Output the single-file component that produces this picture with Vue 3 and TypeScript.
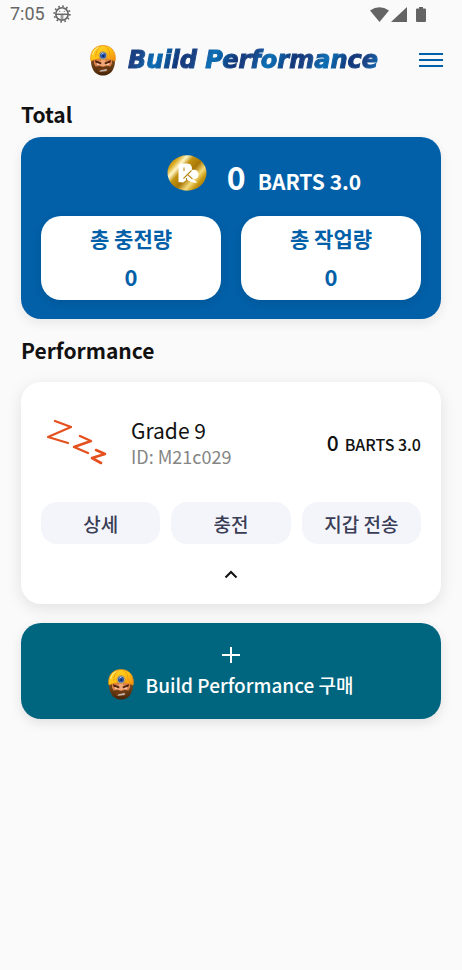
<script setup lang="ts">
import { ref } from 'vue'

interface Stat {
  label: string
  value: number
}

const unit = 'BARTS 3.0'
const balance = ref(0)
const stats = ref<Stat[]>([
  { label: '총 충전량', value: 0 },
  { label: '총 작업량', value: 0 },
])
const worker = ref({ grade: 'Grade 9', id: 'M21c029', amount: 0 })
const actions: string[] = ['상세', '충전', '지갑 전송']
const expanded = ref(true)
</script>

<template>
  <div class="page">
    <svg class="sprite" aria-hidden="true">
      <defs>
        <linearGradient id="helmet" x1="0" y1="0" x2="1" y2="1">
          <stop offset="0" stop-color="#ffd52e" />
          <stop offset="0.5" stop-color="#ffc414" />
          <stop offset="1" stop-color="#f08a12" />
        </linearGradient>
        <linearGradient id="beard" x1="0" y1="0" x2="0" y2="1">
          <stop offset="0" stop-color="#85501f" />
          <stop offset="1" stop-color="#452509" />
        </linearGradient>
        <linearGradient id="gold" x1="0" y1="0.1" x2="1" y2="0.9">
          <stop offset="0" stop-color="#b07c08" />
          <stop offset="0.16" stop-color="#d8a91c" />
          <stop offset="0.27" stop-color="#fff6c8" />
          <stop offset="0.38" stop-color="#c2920f" />
          <stop offset="0.55" stop-color="#a87706" />
          <stop offset="0.7" stop-color="#f4dc7c" />
          <stop offset="0.82" stop-color="#c8960f" />
          <stop offset="1" stop-color="#94690a" />
        </linearGradient>
        <symbol id="miner" viewBox="0 0 26 31">
          <path d="M1.200 13C.8 17 1 21 3 24.500 5 28.500 9 30.600 13 30.600S21 28.500 23 24.500C25 21 25.200 17 24.800 13z" fill="url(#beard)" />
          <path d="M4 13h18v5.500l-1.500 3-4-.5-3.500 1-3.500-1-4 .5L4 18.500z" fill="#d9804f" />
          <path d="M11.200 14h3.600l1.200 6.500-3 1.200-3-1.200z" fill="#f0a576" />
          <path d="M5 15l6.500 2.700-.5 1.600-5.500-1.700zM21 15l-6.500 2.700.5 1.600 5.500-1.700z" fill="#4b210b" />
          <path d="M6.800 18.300l3.200 1-1.500.8-1.700-.6zM19.200 18.300l-3.200 1 1.500.8 1.700-.6z" fill="#f3dccb" />
          <path d="M7 23.500c3-2.500 9-2.500 12 0l-1 3.500H8z" fill="#6d3811" />
          <path d="M9.500 26c2-1.800 5-1.200 7.500-2.300l-.5 2.400-6.500.7z" fill="#bfb5ad" />
          <path d="M.6 14.500C.2 6 5 .5 13 .5S25.800 6 25.400 14.500q.2 2-1.300 1.200C19 13.200 7 13.200 1.900 15.700.4 16.500.6 14.500.6 14.500z" fill="url(#helmet)" stroke="#e78b12" stroke-width="0.7" />
          <path d="M10.500 1.500C7.500 3 6 7 5.800 12M15.500 1.500C18.500 3 20 7 20.200 12" fill="none" stroke="#f0980e" stroke-width="0.9" />
          <path d="M8.500 2.500C5 4 3 7 2.700 10" fill="none" stroke="#fff09a" stroke-width="1" />
          <circle cx="13" cy="10.500" r="4" fill="#d7c99b" stroke="#a4792a" stroke-width="0.6" />
          <circle cx="13" cy="10.500" r="3.100" fill="#2b55a8" />
          <path d="M11.200 9.600a2 2 0 0 1 2.200-1.200" fill="none" stroke="#a6cbff" stroke-width="1" />
          <circle cx="13.300" cy="11" r="1" fill="#0c2358" />
        </symbol>
      </defs>
    </svg>

    <div class="status">
      <span class="clock">7:05</span>
      <svg class="gear" viewBox="0 0 18 18" aria-hidden="true">
        <circle cx="9" cy="9" r="7.800" fill="none" stroke="#666" stroke-width="1.800" stroke-dasharray="1.600 2.484" />
        <circle cx="9" cy="9" r="6.200" fill="none" stroke="#666" stroke-width="1.600" />
        <path d="M3 9.300h12" stroke="#666" stroke-width="1.500" />
        <path d="M8.200 9.500v5.500M9.800 9.500v5.500" stroke="#666" stroke-width="0.900" />
        <path d="M6 6.400h1.300M10.700 6.400H12" stroke="#888" stroke-width="1" />
      </svg>
      <div class="signals">
        <svg width="19" height="15" viewBox="0 0 19 15" aria-hidden="true"><path d="M0 3.500Q9.500-3 19 3.500L9.500 15z" fill="#646464" /></svg>
        <svg width="16" height="15" viewBox="0 0 16 15" aria-hidden="true"><path d="M16 0v15H0z" fill="#646464" /></svg>
        <svg class="battery" width="10" height="15" viewBox="0 0 10 15" aria-hidden="true"><path d="M3 0h4v1.500h2q1 0 1 1V14q0 1-1 1H1q-1 0-1-1V2.500q0-1 1-1h2z" fill="#646464" /></svg>
      </div>
    </div>

    <header class="header">
      <div class="brand">
        <svg class="miner" aria-hidden="true"><use href="#miner" /></svg>
        <h1 class="logo">Build Performance</h1>
      </div>
      <button class="menu" type="button" aria-label="Menu">
        <svg width="24" height="16" viewBox="0 0 24 16" aria-hidden="true"><path d="M0 2h24M0 8h24M0 14h24" stroke="#0260a8" stroke-width="2" /></svg>
      </button>
    </header>

    <main class="content">
      <h2 class="heading">Total</h2>
      <section class="total">
        <div class="balance">
          <svg class="coin" viewBox="0 0 40 36" aria-hidden="true">
            <ellipse cx="20" cy="18" rx="19.500" ry="17.700" fill="url(#gold)" />
            <path d="M11.500 27V11.500q0-3 3-3H20c4.500 0 5.500 3.500 4.800 6.500 4-1 6.700 1 6.700 4.500 0 3.300-2.500 5-5.500 4.500l4.500 3.500c-4 .5-8-.5-10.500-3L16 27.500z" fill="#fff" />
            <path d="M17 12.500v3.500M24.500 15.500L16.500 23.500M21 20l4.500 4M19.500 23v2.500" fill="none" stroke="#b98d1c" stroke-width="1.100" />
          </svg>
          <span class="balance-value">{{ balance }}</span>
          <span class="balance-unit">{{ unit }}</span>
        </div>
        <div class="stats">
          <div v-for="stat in stats" :key="stat.label" class="stat">
            <span class="stat-label">{{ stat.label }}</span>
            <span class="stat-value">{{ stat.value }}</span>
          </div>
        </div>
      </section>

      <h2 class="heading performance-heading">Performance</h2>
      <section class="card">
        <div class="worker">
          <svg class="sleep" viewBox="0 0 60 46" aria-hidden="true">
            <g fill="none" stroke="#e4501e" stroke-linecap="round" stroke-linejoin="round">
              <path d="M8 2L24 8 1 18 21 24" stroke-width="2.200" />
              <path d="M33 17L44 22 27 28 41 34" stroke-width="2.400" />
              <path d="M49 31L58 35 45 39 54 44" stroke-width="2.600" />
            </g>
          </svg>
          <div class="identity">
            <span class="grade">{{ worker.grade }}</span>
            <span class="worker-id">ID: {{ worker.id }}</span>
          </div>
          <div class="amount">
            <span class="amount-value">{{ worker.amount }}</span>
            <span class="amount-unit">{{ unit }}</span>
          </div>
        </div>
        <div class="actions">
          <button v-for="action in actions" :key="action" class="action" type="button">{{ action }}</button>
        </div>
        <button class="toggle" type="button" aria-label="Toggle" :aria-expanded="expanded" @click="expanded = !expanded">
          <svg width="14" height="9" viewBox="0 0 14 9" aria-hidden="true"><path d="M1.500 7.500L7 2l5.500 5.500" fill="none" stroke="#111" stroke-width="2" /></svg>
        </button>
      </section>

      <button class="purchase" type="button">
        <svg width="18" height="16" viewBox="0 0 18 16" aria-hidden="true"><path d="M0 8h18M9 0v16" stroke="#fff" stroke-width="2" /></svg>
        <span class="purchase-line">
          <svg class="miner" aria-hidden="true"><use href="#miner" /></svg>
          <span>Build Performance 구매</span>
        </span>
      </button>
    </main>
  </div>
</template>

<style>
body {
  margin: 0;
  background: #fafafa;
}
</style>

<style scoped>
.page {
  min-height: 100vh;
  background: #fafafa;
  color: #111;
  font-family: "Noto Sans CJK KR", "Noto Sans", sans-serif;
}

button {
  border: 0;
  padding: 0;
  font-family: inherit;
  cursor: pointer;
}

svg {
  display: block;
  flex: none;
}

.sprite {
  position: absolute;
  width: 0;
  height: 0;
}

.status {
  display: flex;
  align-items: center;
  height: 28px;
  padding: 0 36px 0 10px;
}

.clock {
  font: 18px/28px Roboto, sans-serif;
  color: #666;
}

.gear {
  width: 18px;
  height: 18px;
  margin-left: 8px;
}

.signals {
  display: flex;
  gap: 2px;
  margin-left: auto;
}

.battery {
  margin-left: 7px;
}

.header {
  display: grid;
  grid-template-columns: 24px 1fr 24px;
  align-items: center;
  height: 64px;
  padding: 0 19px;
}

.brand {
  grid-column: 2;
  display: flex;
  align-items: center;
  justify-content: center;
  gap: 12px;
  padding-left: 8px;
}

.miner {
  width: 26px;
  height: 31px;
}

.logo {
  margin: 0;
  padding-right: 2px;
  font: italic 700 24px/32px "DejaVu Sans", sans-serif;
  white-space: nowrap;
  color: transparent;
  -webkit-text-stroke: 1px transparent;
  background: repeating-linear-gradient(115deg, #12377a 0, #1b4385 14px, #0e6fb5 30px, #0c63a8 36px, #12377a 52px);
  background-clip: text;
}

.menu {
  display: flex;
  align-items: center;
  justify-content: center;
  height: 32px;
  background: none;
}

.content {
  padding: 8px 21px 24px;
}

.heading {
  margin: 0 0 9px;
  font-size: 21px;
  line-height: 28px;
  font-weight: 700;
}

.performance-heading {
  margin: 17px 0 18px;
}

.total {
  padding: 15px 20px 19px;
  border-radius: 20px;
  background: #0260a8;
  box-shadow: 0 4px 12px rgba(0, 0, 0, 0.08);
}

.balance {
  display: flex;
  align-items: baseline;
  justify-content: center;
  height: 64px;
  padding-left: 66px;
  color: #fff;
  font-weight: 700;
}

.coin {
  align-self: flex-start;
  width: 40px;
  height: 36px;
  margin: 3px 20px 0 0;
}

.balance-value {
  font-size: 32px;
  line-height: 48px;
}

.balance-unit {
  margin-left: 12px;
  font-size: 21px;
  line-height: 30px;
}

.stats {
  display: grid;
  grid-template-columns: 1fr 1fr;
  gap: 20px;
}

.stat {
  display: flex;
  flex-direction: column;
  align-items: center;
  gap: 10px;
  padding: 8px 0 10px;
  border-radius: 20px;
  background: #fff;
  box-shadow: 0 3px 10px rgba(0, 0, 0, 0.1);
  color: #0260a8;
  font-weight: 700;
}

.stat-label {
  font-size: 21px;
  line-height: 28px;
}

.stat-value {
  font-size: 22px;
  line-height: 28px;
}

.card {
  padding: 34px 20px 18px;
  border-radius: 20px;
  background: #fff;
  box-shadow: 0 4px 16px rgba(0, 0, 0, 0.1);
}

.worker {
  display: flex;
  align-items: center;
  padding-left: 6px;
}

.sleep {
  width: 60px;
  height: 46px;
  margin-right: 24px;
}

.identity {
  display: flex;
  flex-direction: column;
}

.grade {
  font-size: 21px;
  line-height: 28px;
}

.worker-id {
  font-size: 18px;
  line-height: 24px;
  color: #858585;
}

.amount {
  display: flex;
  align-items: baseline;
  gap: 6px;
  margin-left: auto;
  font-weight: 500;
}

.amount-value {
  font-size: 21px;
}

.amount-unit {
  font-size: 16px;
}

.actions {
  display: grid;
  grid-template-columns: repeat(3, 1fr);
  gap: 11px;
  margin-top: 34px;
}

.action {
  height: 42px;
  border-radius: 16px;
  background: #f4f5fb;
  color: #3a3d56;
  font-size: 19px;
  font-weight: 500;
}

.toggle {
  display: flex;
  align-items: center;
  justify-content: center;
  width: 100%;
  height: 24px;
  margin-top: 18px;
  background: none;
}

.purchase {
  display: flex;
  flex-direction: column;
  align-items: center;
  gap: 6px;
  width: 100%;
  margin-top: 19px;
  padding: 24px 0 19px;
  border-radius: 20px;
  background: #006680;
  box-shadow: 0 4px 12px rgba(0, 0, 0, 0.1);
  color: #fff;
  font-size: 19px;
  line-height: 26px;
  font-weight: 500;
}

.purchase-line {
  display: flex;
  align-items: center;
  gap: 11px;
}
</style>
